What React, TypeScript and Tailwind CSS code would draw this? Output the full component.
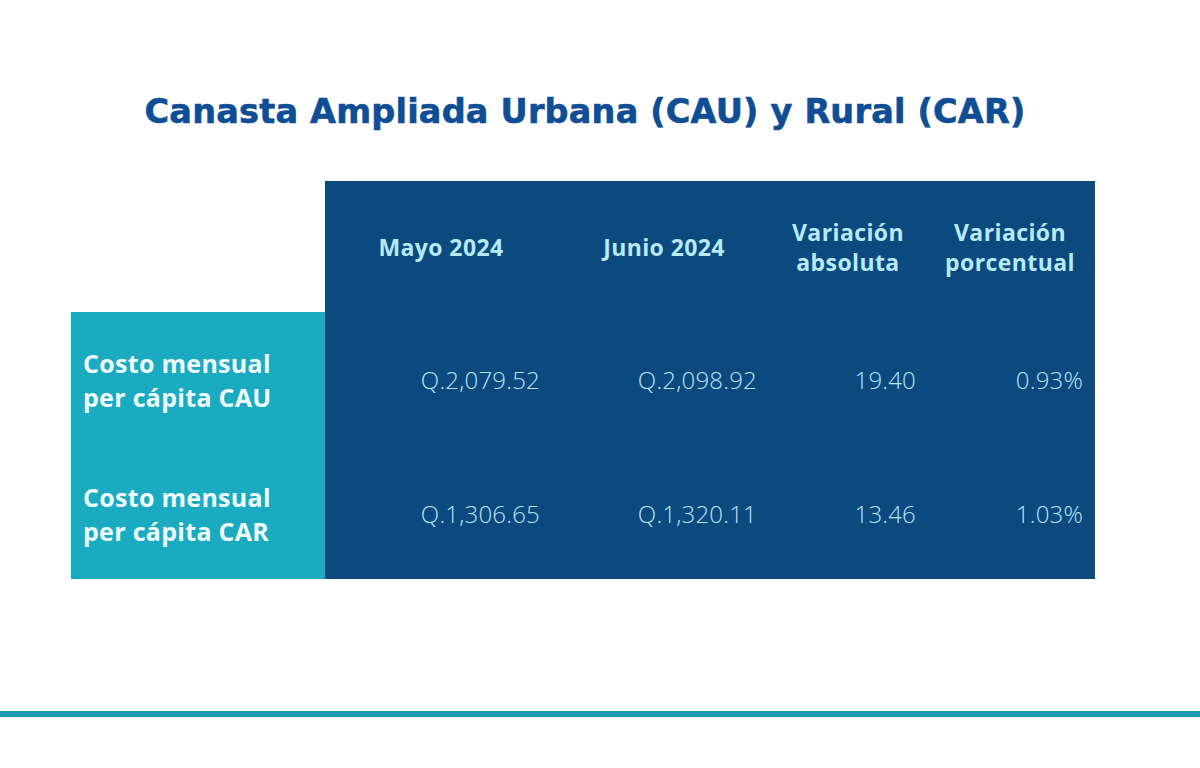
import React from "react";

const headers: { lines: string[] }[] = [
  { lines: ["Mayo 2024"] },
  { lines: ["Junio 2024"] },
  { lines: ["Variación", "absoluta"] },
  { lines: ["Variación", "porcentual"] },
];

const rows = [
  { label: ["Costo mensual", "per cápita CAU"], values: ["Q.2,079.52", "Q.2,098.92", "19.40", "0.93%"] },
  { label: ["Costo mensual", "per cápita CAR"], values: ["Q.1,306.65", "Q.1,320.11", "13.46", "1.03%"] },
];

const pads = ["pr-[17px]", "pr-[14px]", "pr-[9px]", "pr-[12px]"];

export default function App() {
  return (
    <div className="w-[1200px] h-[768px] bg-white flex flex-col overflow-hidden" style={{ fontFamily: '"Open Sans", "Noto Sans", sans-serif' }}>
      <h1
        className="pt-[91px] pr-[30px] text-center text-[33.5px] leading-[42px] font-bold text-[#0f4e95] tracking-[0.2px]"
        style={{ fontFamily: '"DejaVu Sans", "Liberation Sans", sans-serif', WebkitTextStroke: "0.6px #0f4e95" }}
      >
        Canasta Ampliada Urbana (CAU) y Rural (CAR)
      </h1>

      <div className="mt-[48px] ml-[71px] grid grid-cols-[254px_232px_214px_154px_170px] grid-rows-[131px_136px_131px]">
        <div className="bg-white" />
        {headers.map((h, i) => (
          <div key={i} className="bg-[#0b497f] flex flex-col items-center justify-center text-[#b7e9f7] font-bold text-[23px] leading-[30px] tracking-[0.4px]">
            {h.lines.map((l) => (
              <span key={l}>{l}</span>
            ))}
          </div>
        ))}
        {rows.map((r, ri) => (
          <React.Fragment key={ri}>
            <div className="bg-[#1babc0] flex flex-col justify-center pl-[12px] text-[#effcff] font-bold text-[25px] leading-[34px] tracking-[0.3px]">
              {r.label.map((l) => (
                <span key={l}>{l}</span>
              ))}
            </div>
            {r.values.map((v, vi) => (
              <div key={vi} className={`bg-[#0b497f] flex items-center justify-end ${pads[vi]} text-[#b7e4f5] text-[24px] tracking-[0.2px] font-[350]`}>
                {v}
              </div>
            ))}
          </React.Fragment>
        ))}
      </div>

      <div className="mt-[132px] h-[6px] w-full bg-[#2199b1]" />
    </div>
  );
}
